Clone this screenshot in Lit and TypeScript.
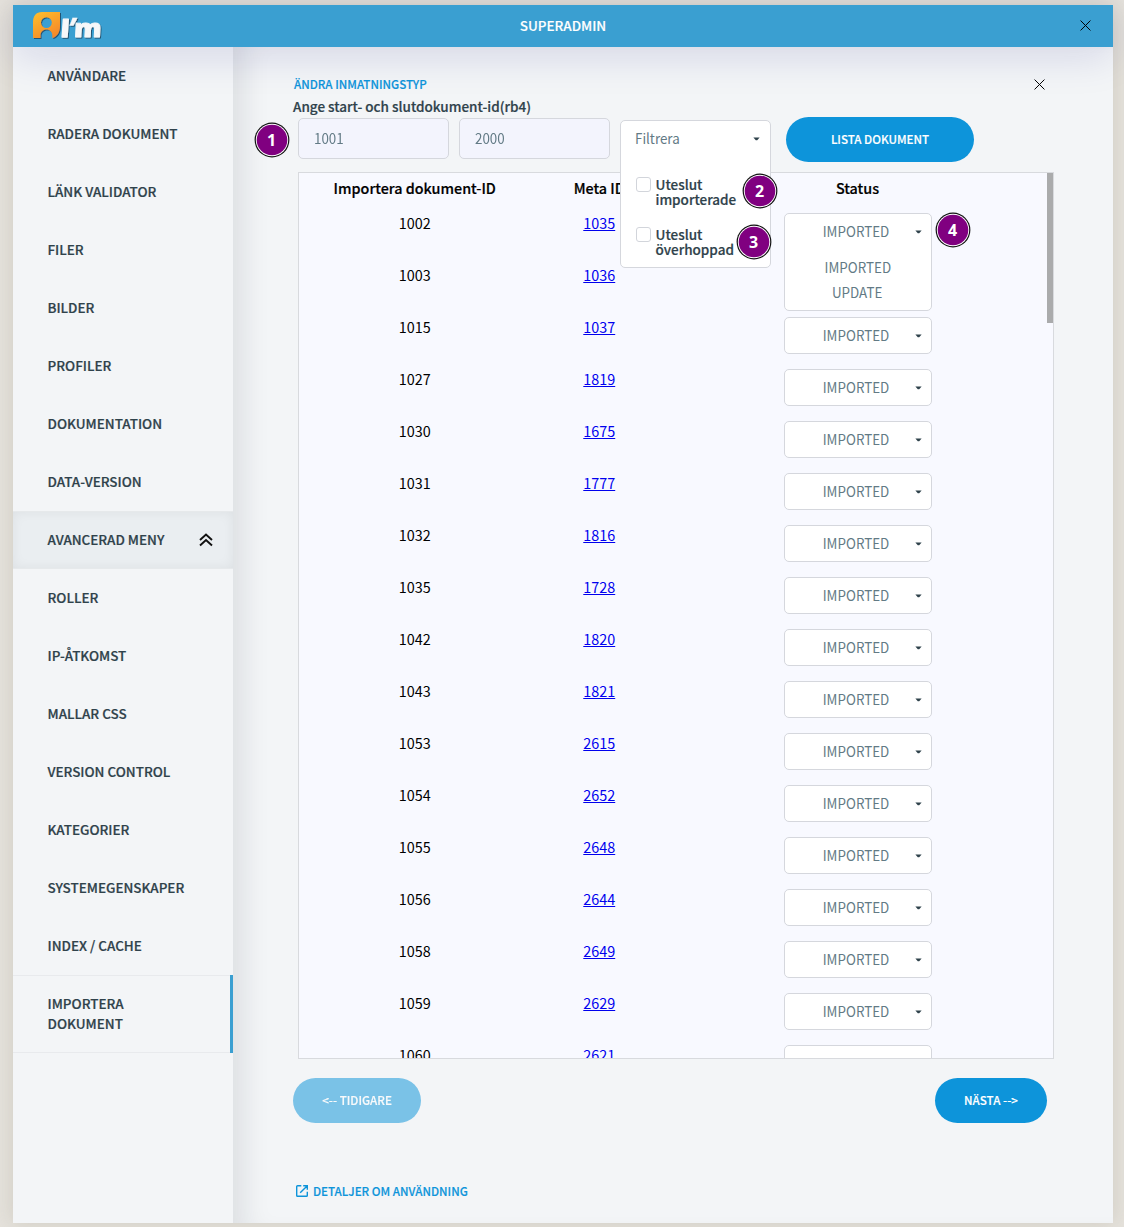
import { LitElement, html, css, svg } from "lit";
import { customElement } from "lit/decorators.js";
import { classMap } from "lit/directives/class-map.js";

const NAV_TOP = ["ANVÄNDARE", "RADERA DOKUMENT", "LÄNK VALIDATOR", "FILER", "BILDER", "PROFILER", "DOKUMENTATION", "DATA-VERSION"];
const NAV_ADVANCED = ["ROLLER", "IP-ÅTKOMST", "MALLAR CSS", "VERSION CONTROL", "KATEGORIER", "SYSTEMEGENSKAPER", "INDEX / CACHE"];
const ROWS: [string, string][] = [
  ["1002", "1035"], ["1003", "1036"], ["1015", "1037"], ["1027", "1819"], ["1030", "1675"], ["1031", "1777"],
  ["1032", "1816"], ["1035", "1728"], ["1042", "1820"], ["1043", "1821"], ["1053", "2615"], ["1054", "2652"],
  ["1055", "2648"], ["1056", "2644"], ["1058", "2649"], ["1059", "2629"], ["1060", "2621"],
];

const cross = svg`<path d="M.5 .5L9.5 9.5M9.5 .5L.5 9.5" stroke="#000" stroke-width=".9" fill="none"/>`;

@customElement("app-root")
export class AppRoot extends LitElement {
  static styles = css`
    :host { display: block; width: 1124px; height: 1227px; overflow: hidden; background: #e5e2dc;
      font-family: "Noto Sans CJK SC", "Open Sans", sans-serif; color: #2f424b; }
    * { box-sizing: border-box; }
    .page { padding: 5px 11px 4px 13px; height: 1227px; }
    .modal { position: relative; width: 1100px; height: 1218px; background: #f3f5f7; box-shadow: 0 0 20px rgba(120, 115, 90, .2);
      display: flex; flex-direction: column; }
    .header { height: 42px; background: #3a9fd1; display: grid; grid-template-columns: 220px 1fr 220px; align-items: center;
      box-shadow: 0 10px 40px rgba(15, 15, 120, .13); z-index: 1; flex: none; }
    .logo { display: flex; padding-left: 19px; height: 42px; }
    .title { text-align: center; color: #fff; font-size: 13.45px; font-weight: 500; line-height: 20px; padding-bottom: 2px; -webkit-text-stroke: .15px #fff; }
    .close { justify-self: end; margin: 0 22px 1px 0; display: block; }
    .main { flex: 1; display: flex; min-height: 0; }
    .side { width: 220px; flex: none; }
    .item { height: 58px; padding: 0 34.5px 2px; display: flex; align-items: center; justify-content: space-between;
      font-size: 13.45px; font-weight: 500; line-height: 20px; white-space: nowrap; -webkit-text-stroke: .2px #2f424b; }
    .item svg { position: relative; top: 1px; }
    .item.group { background: #eaeef1; border: solid #e6e9eb; border-width: 1px 0; box-shadow: inset 0 0 12px rgba(0, 0, 0, .06); padding-right: 20px; }
    .item.active { height: 78px; border: solid #e8eaed; border-width: 1px 0; position: relative; white-space: normal; padding-right: 80px; }
    .item.active::after { content: ""; position: absolute; right: 0; top: -1px; bottom: -1px; width: 3px; background: #3a9fd1; }
    .content { flex: 1; padding: 27px 59px 0 60px; box-shadow: inset 28px 0 28px -18px rgba(20, 30, 40, .1); position: relative; }
    .top { display: flex; justify-content: space-between; align-items: center; height: 21px; padding: 0 9px 0 1px; }
    .top .link { padding-bottom: 2px; }
    .link { color: #0d94da; font-size: 11.6px; font-weight: 500; line-height: 18px; -webkit-text-stroke: .15px #0d94da; }
    .label { font-size: 13.5px; font-weight: 500; line-height: 20px; height: 22px; padding-top: 1px; -webkit-text-stroke: .2px #2f424b; }
    .filters { display: flex; height: 55px; padding-left: 5px; }
    .input { width: 151px; height: 41px; margin: 1px 10px 0 0; border: 1px solid #d5d7dd; border-radius: 5px; background: #f3f4fd;
      padding: 0 15px; color: #627a85; font-size: 14.4px; line-height: 38px; }
    .narrow { display: inline-block; transform: scaleX(.93); }
    .narrow.left { transform-origin: 0 50%; }
    .filter { position: relative; width: 151px; margin-right: 15px; padding-top: 3px; z-index: 2; }
    .panel { position: absolute; top: 3px; left: 0; width: 151px; height: 148px; background: #fff; border: 1px solid #d5d7dd; border-radius: 5px; }
    .panelhead { display: flex; justify-content: space-between; align-items: center; height: 36px; padding: 0 10px 1px 14px;
      font-size: 14.4px; line-height: 35px; color: #627a85; }
    .panelhead .narrow, .select .narrow { transform: translateY(-1px) scaleX(.93); }
    .arrow { width: 7px; height: 4px; display: block; }
    .check { display: flex; gap: 4.5px; padding-left: 15px; height: 50px; font-size: 13.5px; font-weight: 500; line-height: 15px; -webkit-text-stroke: .2px #2f424b; }
    .checks { padding-top: 20px; }
    .box { width: 15px; height: 15px; border: 1px solid #d2d5db; border-radius: 3px; flex: none; background: #fff; }
    .btn { height: 45px; border-radius: 22.5px; background: #0d94da; color: #fff; font-size: 11.6px; font-weight: 500; line-height: 45px;
      text-align: center; -webkit-text-stroke: .15px #fff; }
    .list { width: 188px; }
    .table { position: relative; margin-left: 5px; width: 756px; height: 887px; border: 1px solid #d8dade; background: #f8f9ff; overflow: hidden; color: #000; }
    .thumb { position: absolute; right: 0; top: 0; width: 6px; height: 150px; background: #aaabac; }
    .row { display: grid; grid-template-columns: 231.5px 137.5px 379px; height: 52px; text-align: center; font-size: 14.4px; line-height: 20px; }
    .row.head { height: 40px; font-size: 14.35px; font-weight: 500; line-height: 22px; padding-top: 4px; -webkit-text-stroke: .2px #000; }
    .meta a { color: #0000ee; text-decoration: underline; }
    .status { display: flex; justify-content: center; }
    .select { width: 148px; height: 37px; border: 1px solid #d5d7dd; border-radius: 5px; background: #fff; color: #627a85;
      font-size: 14.4px; position: relative; z-index: 1; }
    .select.open { height: 98px; z-index: 2; }
    .value { display: grid; grid-template-columns: 1fr 7px; align-items: center; height: 35px; line-height: 35px; padding: 0 9px 0 12px; }
    .option { line-height: 25px; height: 25px; }
    .value + .option { margin-top: 6px; }
    .pager { display: flex; justify-content: space-between; padding: 19px 7px 0 0; }
    .prev { width: 128px; opacity: .52; }
    .next { width: 112px; }
    .details { display: flex; align-items: center; gap: 5px; margin: 59px 0 0 3px; height: 18px; }
    .badge { position: absolute; width: 34px; height: 34px; z-index: 5; display: block; overflow: visible; }
    .b1 { left: 242px; top: 118px; }
    .b2 { left: 730px; top: 169px; }
    .b3 { left: 724px; top: 220px; }
    .b4 { left: 923px; top: 208px; }
  `;

  private arrow() {
    return html`<svg class="arrow" viewBox="0 0 7 4"><path d="M.4 0.4H6.600L4.200 3.200H2.800Z" fill="#2f424b" /></svg>`;
  }

  private badge(n: number) {
    return html`<svg class=${"badge b" + n} viewBox="0 0 34 34">
      <circle cx="17" cy="17" r="17.4" fill="#111" /><circle cx="17" cy="17" r="16.2" fill="#fff" />
      <circle cx="17" cy="17" r="15.3" fill="#800080" />
      <text x="16.600" y="23" text-anchor="middle" font-family="Noto Sans" font-weight="700" font-size="16" fill="#fff">${n}</text>
    </svg>`;
  }

  private logo() {
    return html`<svg width="76" height="42" viewBox="0 0 76 42">
      <defs>
        <linearGradient id="leaf" x1="0" y1="0" x2=".6" y2="1"><stop offset="0" stop-color="#ffc02d" /><stop offset="1" stop-color="#f58a2b" /></linearGradient>
        <filter id="shade" x="-10%" y="-10%" width="130%" height="130%"><feDropShadow dx="1" dy="1" stdDeviation=".7" flood-color="#123" flood-opacity=".6" /></filter>
      </defs>
      <g filter="url(#shade)">
        <path fill="url(#leaf)" fill-rule="evenodd" d="M10 7H28V21C28 27 25 32 20.300 33V30C20.300 27 18 24.500 14.400 24.500S8.500 27 8.500 30V33H1V17C1 11 4 7 10 7ZM14.400 12.200A5.400 5.400 0 1 0 14.400 23A5.400 5.400 0 1 0 14.400 12.200Z" />
        <g font-family="Open Sans" font-weight="800" fill="#f6f7f9" stroke="#f6f7f9" stroke-linejoin="round">
          <text transform="translate(28.300 32.200) skewX(-4)" font-size="25" stroke-width="1.400">I</text>
          <text transform="translate(34.800 32) skewX(-12)" font-size="27" stroke-width=".2">’</text>
          <text transform="translate(41.800 32.400) skewX(-3)" font-size="25" stroke-width=".9" textLength="27.500" lengthAdjust="spacingAndGlyphs">m</text>
        </g>
      </g>
    </svg>`;
  }

  render() {
    return html`<div class="page"><div class="modal">
      <header class="header">
        <div class="logo">${this.logo()}</div>
        <div class="title">SUPERADMIN</div>
        <svg class="close" width="11" height="11" viewBox="0 0 10 10">${cross}</svg>
      </header>
      <div class="main">
        <nav class="side">
          ${NAV_TOP.map((t) => html`<div class="item">${t}</div>`)}
          <div class="item group">AVANCERAD MENY
            <svg width="14" height="14" viewBox="0 0 14 14"><path d="M1 7L7 1.500L13 7M1 12.500L7 7L13 12.500" fill="none" stroke="#111" stroke-width="1.900" /></svg>
          </div>
          ${NAV_ADVANCED.map((t) => html`<div class="item">${t}</div>`)}
          <div class="item active">IMPORTERA DOKUMENT</div>
        </nav>
        <section class="content">
          <div class="top"><span class="link">ÄNDRA INMATNINGSTYP</span>
            <svg width="11" height="11" viewBox="0 0 10 10">${cross}</svg></div>
          <div class="label">Ange start- och slutdokument-id(rb4)</div>
          <div class="filters">
            <div class="input"><span class="narrow left">1001</span></div>
            <div class="input"><span class="narrow left">2000</span></div>
            <div class="filter"><div class="panel">
              <div class="panelhead"><span class="narrow left">Filtrera</span>${this.arrow()}</div>
              <div class="checks">
                <div class="check"><span class="box"></span><span>Uteslut<br />importerade</span></div>
                <div class="check"><span class="box"></span><span>Uteslut<br />överhoppad</span></div>
              </div>
            </div></div>
            <div class="btn list">LISTA DOKUMENT</div>
          </div>
          <div class="table">
            <div class="row head"><div>Importera dokument-ID</div><div>Meta ID</div><div>Status</div></div>
            ${ROWS.map(([id, meta], i) => html`<div class="row">
              <div>${id}</div><div class="meta"><a>${meta}</a></div>
              <div class="status"><div class=${classMap({ select: true, open: i === 0 })}>
                <div class="value"><span class="narrow">IMPORTED</span>${this.arrow()}</div>
                ${i === 0 ? html`<div class="option"><span class="narrow">IMPORTED</span></div><div class="option"><span class="narrow">UPDATE</span></div>` : ""}
              </div></div>
            </div>`)}
            <div class="thumb"></div>
          </div>
          <div class="pager"><div class="btn prev">&lt;-- TIDIGARE</div><div class="btn next">NÄSTA --&gt;</div></div>
          <div class="details">
            <svg width="12" height="12" viewBox="0 0 12 12" fill="none" stroke="#0d94da" stroke-width="1.400"><path d="M5.300 .7H1.600Q.7 .7 .7 1.600V10.400Q.7 11.300 1.600 11.300H10.400Q11.300 11.300 11.300 10.400V6.700M7.200 .7H11.300V4.800M11.300 .7L4.200 7.800" /></svg>
            <span class="link">DETALJER OM ANVÄNDNING</span>
          </div>
        </section>
      </div>
      ${[1, 2, 3, 4].map((n) => this.badge(n))}
    </div></div>`;
  }
}
